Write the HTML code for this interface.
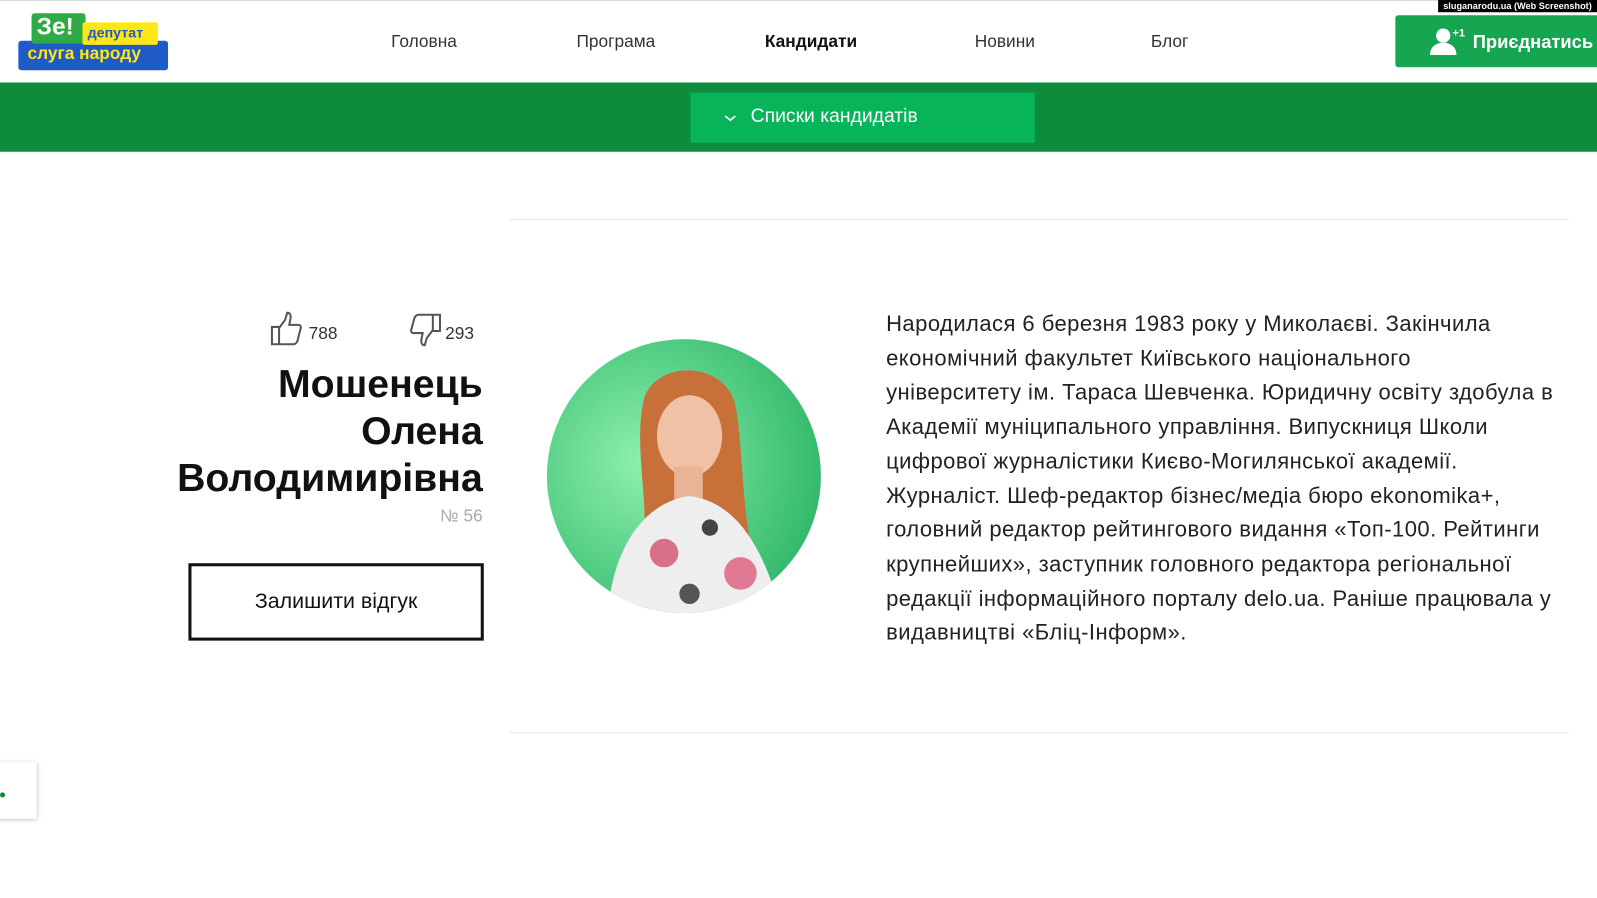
<!DOCTYPE html>
<html><head><meta charset="utf-8"><style>
*{margin:0;padding:0;box-sizing:border-box}
body{width:1597px;height:898px;background:#fff;font-family:"Liberation Sans",sans-serif;position:relative;overflow:hidden;color:#222}
#w{position:absolute;left:0;top:0;width:1568px;height:882px;transform:scale(1.0185);transform-origin:0 0}
.a{position:absolute}
.nav{font-size:17px;color:#333;top:31px}
</style></head><body><div id="w">
<div class="a" style="left:0;top:0;width:1600px;height:1px;background:#ddd"></div>
<!-- logo -->
<div class="a" style="left:18px;top:40px;width:147px;height:29px;background:#1e5bc6;border-radius:3px"></div>
<div class="a" style="left:31px;top:13px;width:53px;height:30px;background:#2faa47;border-radius:3px"></div>
<div class="a" style="left:81px;top:22px;width:74px;height:22px;background:#ffe617;border-radius:2px"></div>
<div class="a" style="left:36px;top:13px;font-size:24px;font-weight:bold;color:#fff">Зе!</div>
<div class="a" style="left:86px;top:24px;font-size:14px;font-weight:bold;color:#1e5bc6">депутат</div>
<div class="a" style="left:27px;top:43px;font-size:17px;font-weight:bold;color:#ffe617">слуга народу</div>
<div class="a nav" style="left:384px">Головна</div>
<div class="a nav" style="left:566px">Програма</div>
<div class="a nav" style="left:751px;font-weight:bold;color:#111">Кандидати</div>
<div class="a nav" style="left:957px">Новини</div>
<div class="a nav" style="left:1130px">Блог</div>
<div class="a" style="left:1370px;top:15px;width:230px;height:51px;background:#16a652;border-radius:3px"></div>
<svg class="a" style="left:1400px;top:24px" width="40" height="32" viewBox="0 0 40 32"><circle cx="17" cy="11" r="7" fill="#fff"/><path d="M4 30c0-8 6-12 13-12s13 4 13 12z" fill="#fff"/><text x="26" y="12" font-size="11" font-weight="bold" fill="#fff" font-family="Liberation Sans">+1</text></svg>
<div class="a" style="left:1446px;top:31px;font-size:18px;font-weight:bold;color:#fff">Приєднатись</div>
<div class="a" style="left:1412px;top:0;width:190px;height:12px;background:#000;color:#fff;font-size:9px;font-weight:bold;padding-left:5px;line-height:12px">sluganarodu.ua (Web Screenshot)</div>
<!-- green bar -->
<div class="a" style="left:0;top:81px;width:1600px;height:68px;background:#0f8b3c"></div>
<div class="a" style="left:678px;top:91px;width:338px;height:49px;background:#07b45a"></div>
<svg class="a" style="left:711px;top:111px" width="12" height="10"><path d="M1 3l5 4 5-4" stroke="#fff" stroke-width="1.6" fill="none"/></svg>
<div class="a" style="left:737px;top:104px;font-size:19px;color:#fff">Списки кандидатів</div>
<!-- lines -->
<div class="a" style="left:500px;top:215px;width:1040px;height:1px;background:#e6e6e6"></div>
<div class="a" style="left:500px;top:719px;width:1040px;height:1px;background:#e6e6e6"></div>
<!-- likes -->
<svg class="a" style="left:265px;top:306px" width="34" height="34" viewBox="0 0 34 34"><path d="M2 15h7v17H2zM9 16l6-8 2-7c3 0 4 3 3 7l-1 5h9c2 0 3 2 2 4l-3 12c-1 2-2 3-4 3H9" fill="none" stroke="#555" stroke-width="2"/></svg>
<div class="a" style="left:303px;top:318px;font-size:17px;color:#333">788</div>
<svg class="a" style="left:400px;top:307px" width="34" height="34" viewBox="0 0 34 34"><path d="M25 2h7v16h-7zM25 17l-6 8-2 7c-3 0-4-3-3-7l1-5H6c-2 0-3-2-2-4l3-11c1-2 2-3 4-3h14" fill="none" stroke="#555" stroke-width="2"/></svg>
<div class="a" style="left:437px;top:318px;font-size:17px;color:#333">293</div>
<div class="a" style="left:154px;top:355px;font-size:38.5px;font-weight:bold;line-height:46px;text-align:right;color:#111;width:320px">Мошенець<br>Олена<br>Володимирівна</div>
<div class="a" style="left:374px;top:497px;width:100px;text-align:right;font-size:17px;color:#aaa">№ 56</div>
<div class="a" style="left:185px;top:553px;width:290px;height:76px;border:3px solid #111;font-size:21px;text-align:center;line-height:70px;color:#111">Залишити відгук</div>
<!-- portrait -->
<svg class="a" style="left:537px;top:333px" width="269" height="269" viewBox="0 0 269 269">
<defs><radialGradient id="g" cx="0.35" cy="0.45" r="0.7"><stop offset="0" stop-color="#8ef0b0"/><stop offset="1" stop-color="#2eb668"/></radialGradient><clipPath id="c"><circle cx="134.5" cy="134.5" r="134.5"/></clipPath></defs>
<g clip-path="url(#c)"><rect width="269" height="269" fill="url(#g)"/>
<path d="M95 60c10-40 80-40 90 5 8 40 5 100 20 160l-40 40-80 0 10-60c5-50 -10-100 0-145z" fill="#c7703a"/>
<ellipse cx="140" cy="95" rx="32" ry="40" fill="#f0c1a4"/>
<rect x="125" y="125" width="28" height="35" fill="#e9b396"/>
<path d="M60 269c5-70 40-110 80-115 40 5 70 40 90 115z" fill="#eeeeee"/>
<circle cx="115" cy="210" r="14" fill="#d9708a"/><circle cx="190" cy="230" r="16" fill="#e07a94"/><circle cx="160" cy="185" r="8" fill="#444"/><circle cx="140" cy="250" r="10" fill="#555"/>
</g></svg>
<div class="a" style="left:870px;top:301px;font-size:21.6px;letter-spacing:0.45px;line-height:33.7px;color:#222;white-space:nowrap">Народилася 6 березня 1983 року у Миколаєві. Закінчила<br>економічний факультет Київського національного<br>університету ім. Тараса Шевченка. Юридичну освіту здобула в<br>Академії муніципального управління. Випускниця Школи<br>цифрової журналістики Києво-Могилянської академії.<br>Журналіст. Шеф-редактор бізнес/медіа бюро ekonomika+,<br>головний редактор рейтингового видання «Топ-100. Рейтинги<br>крупнейших», заступник головного редактора регіональної<br>редакції інформаційного порталу delo.ua. Раніше працювала у<br>видавництві «Бліц-Інформ».</div>
<div class="a" style="left:-4px;top:748px;width:40px;height:56px;background:#fff;box-shadow:1px 1px 4px rgba(0,0,0,.25)"></div>
<div class="a" style="left:0;top:778px;width:5px;height:5px;background:#0f8b3c;border-radius:50%"></div>
</div></body></html>
